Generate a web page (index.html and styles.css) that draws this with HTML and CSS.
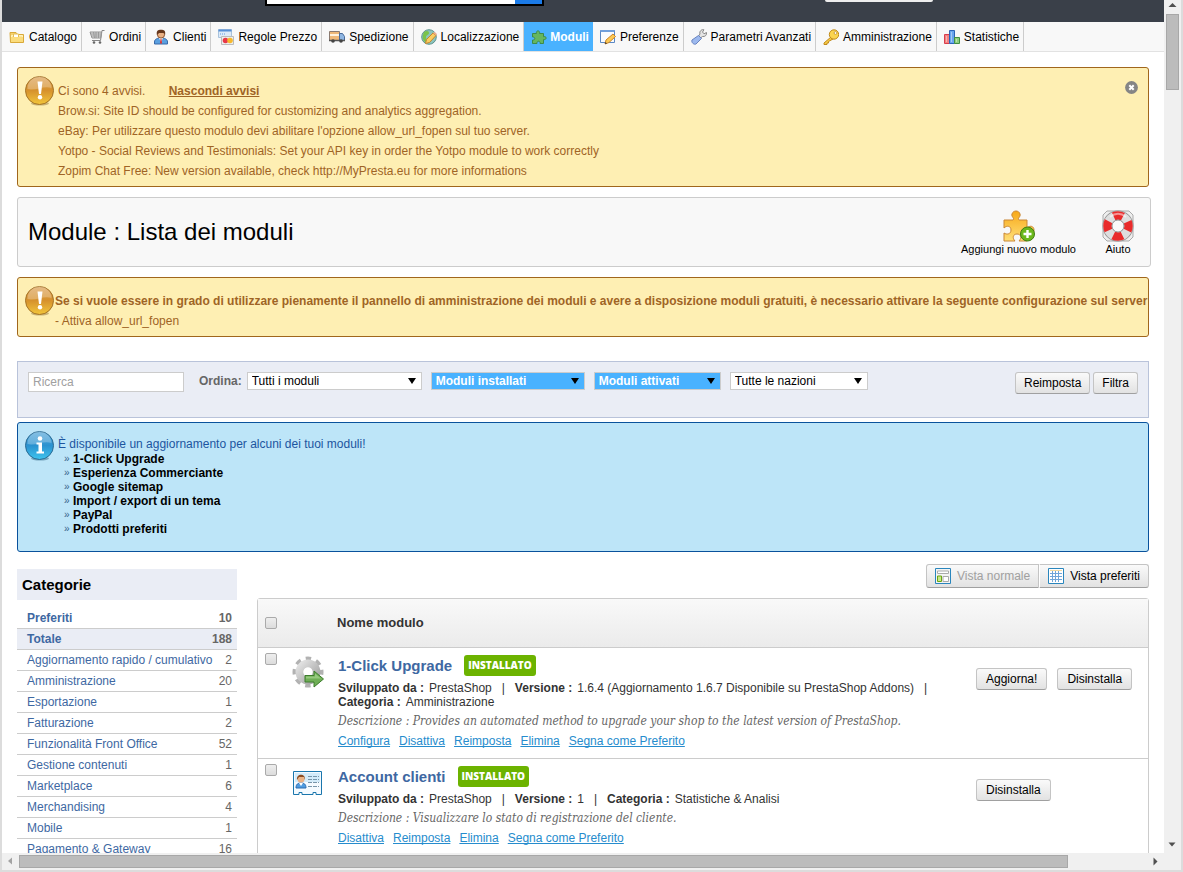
FILE: index.html
```html
<!DOCTYPE html>
<html lang="it">
<head>
<meta charset="utf-8">
<title>Module : Lista dei moduli</title>
<link rel="stylesheet" href="styles.css">
</head>
<body>
<svg class="defs" aria-hidden="true">
  <defs>
    <linearGradient id="gold" x1="0" y1="0" x2="0" y2="1"><stop offset="0" stop-color="#dda45c"/><stop offset=".5" stop-color="#d6912c"/><stop offset="1" stop-color="#f2c63c"/></linearGradient>
    <linearGradient id="blue" x1="0" y1="0" x2="0" y2="1"><stop offset="0" stop-color="#5ba9da"/><stop offset=".5" stop-color="#2a92d0"/><stop offset="1" stop-color="#3fc4ee"/></linearGradient>
    <linearGradient id="puzzle" x1="0" y1="0" x2="0" y2="1"><stop offset="0" stop-color="#f7a818"/><stop offset="1" stop-color="#ffe079"/></linearGradient>
    <linearGradient id="gear" x1="0" y1="0" x2="1" y2="1"><stop offset="0" stop-color="#e2e2e2"/><stop offset="1" stop-color="#a4a4a4"/></linearGradient>
    <symbol id="warn" viewBox="0 0 30 30">
      <ellipse cx="15" cy="27.500" rx="9" ry="2" fill="#a58d54" opacity=".6"/>
      <circle cx="14.500" cy="14.500" r="14" fill="url(#gold)" stroke="#a37228"/>
      <path d="M2.500 13a12 12 0 0 1 24-1c-7-3-16 3-24 1z" fill="#fff" opacity=".25"/>
      <path d="M12.500 5.500h5l-1.500 12.500h-2z" fill="#fff"/><circle cx="15" cy="21.200" r="2.200" fill="#fff"/>
    </symbol>
    <symbol id="info" viewBox="0 0 30 30">
      <ellipse cx="15" cy="27.500" rx="9" ry="2" fill="#497d99" opacity=".6"/>
      <circle cx="14.500" cy="14.500" r="14" fill="url(#blue)" stroke="#2b6a92"/>
      <path d="M2.500 13a12 12 0 0 1 24-1c-7-3-16 3-24 1z" fill="#fff" opacity=".25"/>
      <circle cx="15" cy="7.500" r="2.300" fill="#fff"/><path d="M11.500 11.500h5.500v9h2v2h-7.500v-2h2v-7h-2z" fill="#fff"/>
    </symbol>
  </defs>
</svg>
<div class="window">
  <div class="viewport">
    <header class="topbar">
      <div class="topsearch"><span></span></div>
      <div class="topbutton"></div>
    </header>
    <nav class="menu">
      <a href="#"><svg viewBox="0 0 16 16"><path d="M1 3.500h6l1.500 2H14.500v8H1.500z" fill="#f6d26d" stroke="#d9a93a"/><path d="M2.500 6.500h11v6h-11z" fill="#ffe89a" stroke="#fff3bf"/><path d="M4.500 5h5v4h-5z" fill="#fff" stroke="#e4bd55"/><path d="M2 8h12v5H2z" fill="#fbdc7c"/></svg>Catalogo</a>
      <a href="#"><svg viewBox="0 0 16 16"><path d="M15.500 1.500h-2.500l-1.500 10H3" fill="none" stroke="#858585"/><path d="M1 3h11.500l-.8 6H3z" fill="#ddd" stroke="#929292"/><path d="M2 5h10M2.500 7h9.500M4.500 3l1 6M7 3v6M9.500 3v6" stroke="#909090" stroke-width=".8"/><circle cx="5" cy="13.500" r="1.300" fill="#666"/><circle cx="11" cy="13.500" r="1.300" fill="#666"/></svg>Ordini</a>
      <a href="#"><svg viewBox="0 0 16 16"><path d="M1.500 15v-2c0-3 3-4 6.500-4s6.500 1 6.500 4v2z" fill="#5aa0e0" stroke="#3868a8"/><path d="M6 9l2 4 2-4z" fill="#fff"/><path d="M7.500 10h1l.5 4-1 1-1-1z" fill="#d33"/><circle cx="8" cy="5.500" r="3.600" fill="#e9b083" stroke="#8c5430"/><path d="M4 6C3 2 5 .8 8 .8S13 2 12 6l-1-2H6z" fill="#66371c"/></svg>Clienti</a>
      <a href="#"><svg viewBox="0 0 16 16"><path d="M.5.500h13v8H.5z" fill="#dceaf8" stroke="#a8c2dc"/><path d="M.5.500h13v2H.5z" fill="#568fd6"/><path d="M2 5h6" stroke="#629bdc" stroke-dasharray="1 1"/><path d="M3.500 7.500h12v8h-12z" fill="#eee" stroke="#bbb"/><circle cx="7.500" cy="11.500" r="2.800" fill="#e83848"/><circle cx="12" cy="11.500" r="2.800" fill="#f7b92d"/></svg>Regole Prezzo</a>
      <a href="#"><svg viewBox="0 0 16 16"><path d="M.5 2.500h10v9H.5z" fill="#eeb878" stroke="#8a7a70"/><path d="M1 6h9" stroke="#fff2dd" stroke-width="2"/><path d="M10.500 4.500h3l2 3v4h-5z" fill="#8fb6e2" stroke="#496b9a"/><path d="M0 11.500h16" stroke="#555" stroke-width="1.500"/><circle cx="4" cy="12" r="1.800" fill="#444"/><circle cx="12" cy="12" r="1.800" fill="#444"/></svg>Spedizione</a>
      <a href="#"><svg viewBox="0 0 16 16"><circle cx="8" cy="8" r="7.300" fill="#8cc4bd" stroke="#5d938e"/><path d="M3 3c3-2 5-1 5 1s-3 2-3 4 2 3 1 6c-3-1-5-4-4-8zM11 3l3 4-2 3z" fill="#7bc34b"/><path d="M4.500 14.500l1-4L12 4l3 2.500-6.500 7z" fill="#f9cd62" stroke="#c8862c"/><path d="M12 4l3 2.500 1-1.500-2.500-2z" fill="#efab88"/></svg>Localizzazione</a>
      <a href="#" class="active"><svg viewBox="0 0 16 16"><path d="M1.500 4.500h4C4.500 1 9.500 1 8.500 4.500h4v3.200c3.500-1 3.500 3.600 0 2.800v4H9c.8-3-3.600-3-3 0H1.500v-3.500c3 .5 3-3.500 0-3z" fill="#65b660" stroke="#3d8b4a"/></svg>Moduli</a>
      <a href="#"><svg viewBox="0 0 16 16"><path d="M.5 1.500h14v12H.5z" fill="#f8fbff" stroke="#5b88c4"/><path d="M.5 2h14" stroke="#6f9fdc" stroke-width="2"/><path d="M5 15l1-4 7-6 2.500 2.500-6.500 6z" fill="#fbc955" stroke="#cc8424"/><path d="M5 15l.5-2 1.500 1.500z" fill="#333"/></svg>Preferenze</a>
      <a href="#"><svg viewBox="0 0 16 16"><path d="M9 5C8 2 11 0 13 .8L11.500 3l1.500 1.800L15.500 3.500C16 6 14 8 11.500 7.500L9.500 9 7.500 7z" fill="#e4e4e4" stroke="#888"/><path d="M7.500 6.500l3 3L5 15c-2 1-5-1.500-4-4z" fill="#9db9ee" stroke="#6884c0"/></svg>Parametri Avanzati</a>
      <a href="#"><svg viewBox="0 0 16 16"><path d="M8 8L1 14v1.500h3V14h1.500v-1.500L10 10z" fill="#f7ca45" stroke="#c08a1c"/><circle cx="11" cy="5.500" r="4.700" fill="#fbd450" stroke="#c08a1c"/><circle cx="12.500" cy="4" r="1.400" fill="#fff" stroke="#b98520" stroke-width=".7"/></svg>Amministrazione</a>
      <a href="#"><svg viewBox="0 0 16 16"><path d="M.5 5.500h5v9h-5z" fill="#f28080" stroke="#d83c4c"/><path d="M5.500 1.500h5v13h-5z" fill="#68a5ee" stroke="#2b64b8"/><path d="M10.500 8.500h5v6h-5z" fill="#8fce7c" stroke="#3f8f42"/><path d="M2.500 7v6M7.500 3v10M12.500 10v3" stroke="#fff" opacity=".4"/></svg>Statistiche</a>
    </nav>
    <main class="content">
      <section class="alert warning">
        <svg class="badge"><use href="#warn"/></svg>
        <div class="lines">
          <p>Ci sono 4 avvisi. <a class="hide" href="#">Nascondi avvisi</a></p>
          <p>Brow.si: Site ID should be configured for customizing and analytics aggregation.</p>
          <p>eBay: Per utilizzare questo modulo devi abilitare l'opzione allow_url_fopen sul tuo server.</p>
          <p>Yotpo - Social Reviews and Testimonials: Set your API key in order the Yotpo module to work correctly</p>
          <p>Zopim Chat Free: New version available, check http://MyPresta.eu for more informations</p>
        </div>
        <button class="close" aria-label="Chiudi"><svg viewBox="0 0 13 13"><circle cx="6.500" cy="6.500" r="6.400" fill="#858585"/><path d="M4.300 4.300l4.400 4.400M8.700 4.300L4.300 8.700" stroke="#fff" stroke-width="2"/></svg></button>
      </section>

      <section class="pagehead">
        <h1>Module : Lista dei moduli</h1>
        <div class="tools">
          <a href="#"><svg viewBox="0 0 32 32"><path d="M1 10h9c2-2-2-3-1-6 1-4 7-4 8 0 1 3-3 4-1 6h8v8c3-3 7-2 7 2s-4 5-7 3v8h-8c3-3 2-7-2-7s-5 4-2 7H1v-8c3 2 7 1 7-3s-4-5-7-2z" fill="url(#puzzle)" stroke="#c98736"/><circle cx="24.500" cy="24" r="7" fill="#6cb81c" stroke="#3f7d12"/><path d="M24.500 20v8M20.500 24h8" stroke="#fff" stroke-width="2.400"/></svg>Aggiungi nuovo modulo</a>
          <a href="#"><svg viewBox="0 0 32 32"><path d="M5 1h22l4 4v22l-4 4H5l-4-4V5z" fill="#eee" stroke="#aaa"/><circle cx="16" cy="16" r="10.500" fill="none" stroke="#8f8f8f" stroke-width="10"/><circle cx="16" cy="16" r="10.500" fill="none" stroke="#dedede" stroke-width="8.500"/><circle cx="16" cy="16" r="10.500" fill="none" stroke="#e92b2b" stroke-width="8.500" stroke-dasharray="9.500 6.993" stroke-dashoffset="4.750"/><circle cx="16" cy="16" r="6" fill="#fafafa" stroke="#999"/><path d="M8 7c5-4 11-4 16 0" fill="none" stroke="#fff" stroke-width="2" opacity=".5"/></svg>Aiuto</a>
        </div>
      </section>

      <section class="alert warning compact">
        <svg class="badge"><use href="#warn"/></svg>
        <div class="lines">
          <p class="strong">Se si vuole essere in grado di utilizzare pienamente il pannello di amministrazione dei moduli e avere a disposizione moduli gratuiti, è necessario attivare la seguente configurazione sul server</p>
          <p>- Attiva allow_url_fopen</p>
        </div>
      </section>

      <form class="filters">
        <input type="text" placeholder="Ricerca" aria-label="Ricerca">
        <label for="ordina">Ordina:</label>
        <span class="select wide"><select id="ordina"><option>Tutti i moduli</option></select></span>
        <span class="select on medium"><select aria-label="Installazione"><option>Moduli installati</option></select></span>
        <span class="select on small"><select aria-label="Attivazione"><option>Moduli attivati</option></select></span>
        <span class="select country"><select aria-label="Nazione"><option>Tutte le nazioni</option></select></span>
        <div class="actions"><button class="btn" type="button">Reimposta</button><button class="btn" type="button">Filtra</button></div>
      </form>

      <section class="alert notice">
        <svg class="badge"><use href="#info"/></svg>
        <div class="lines">
          <p>È disponibile un aggiornamento per alcuni dei tuoi moduli!</p>
          <ul>
            <li>1-Click Upgrade</li>
            <li>Esperienza Commerciante</li>
            <li>Google sitemap</li>
            <li>Import / export di un tema</li>
            <li>PayPal</li>
            <li>Prodotti preferiti</li>
          </ul>
        </div>
      </section>

      <div class="columns">
        <aside class="categories">
          <h2>Categorie</h2>
          <ul>
            <li class="bold"><a href="#">Preferiti</a><span>10</span></li>
            <li class="bold current"><a href="#">Totale</a><span>188</span></li>
            <li><a href="#">Aggiornamento rapido / cumulativo</a><span>2</span></li>
            <li><a href="#">Amministrazione</a><span>20</span></li>
            <li><a href="#">Esportazione</a><span>1</span></li>
            <li><a href="#">Fatturazione</a><span>2</span></li>
            <li><a href="#">Funzionalità Front Office</a><span>52</span></li>
            <li><a href="#">Gestione contenuti</a><span>1</span></li>
            <li><a href="#">Marketplace</a><span>6</span></li>
            <li><a href="#">Merchandising</a><span>4</span></li>
            <li><a href="#">Mobile</a><span>1</span></li>
            <li><a href="#">Pagamento &amp; Gateway</a><span>16</span></li>
          </ul>
        </aside>
        <div class="modules">
          <div class="views">
            <button disabled><svg viewBox="0 0 16 16"><path d="M.5.500h15v15H.5z" fill="#f4f4f4" stroke="#2a86bd"/><path d="M2.500 3h11v2.500h-11zM8 8.500h5.500v5H8z" fill="#fff" stroke="#aaa"/><path d="M2.500 8h4v5.500h-4z" fill="#c9e887" stroke="#6aa513"/></svg>Vista normale</button>
            <button><svg viewBox="0 0 16 16"><path d="M.5.500h15v15H.5z" fill="#fff" stroke="#2a86bd"/><path d="M2 2.500h12" stroke="#f0d9a0"/><path d="M2 5.500h12M2 8.500h12M2 11.500h12M4.500 3v11M7.500 3v11M10.500 3v11" stroke="#6fa5d8"/></svg>Vista preferiti</button>
          </div>
          <table>
            <thead>
              <tr><th class="check"><input type="checkbox" aria-label="Seleziona tutti"></th><th class="icon"></th><th class="name">Nome modulo</th><th class="ops"></th></tr>
            </thead>
            <tbody>
              <tr>
                <td class="check"><input type="checkbox" aria-label="1-Click Upgrade"></td>
                <td class="icon"><svg viewBox="0 0 32 32"><circle cx="16" cy="16" r="13" fill="none" stroke="#b2b2b2" stroke-width="5" stroke-dasharray="5.200 5.010" stroke-dashoffset="2.600"/><circle cx="16" cy="16" r="8.500" fill="none" stroke="url(#gear)" stroke-width="8"/><circle cx="16" cy="16" r="4.500" fill="#fff"/><path d="M13 19.500h9V15l9.500 8-9.500 8v-5h-9z" fill="#6fae56" stroke="#3d7d2c"/><path d="M14 20.500h9v-3l6 5H14z" fill="#a6d490" opacity=".7"/></svg></td>
                <td class="name">
                  <h3>1-Click Upgrade <span>INSTALLATO</span></h3>
                  <div class="meta"><span><b>Sviluppato da :</b>PrestaShop</span><i>|</i><span><b>Versione :</b>1.6.4 (Aggiornamento 1.6.7 Disponibile su PrestaShop Addons)</span><i>|</i><span><b>Categoria :</b>Amministrazione</span></div>
                  <p>Descrizione : Provides an automated method to upgrade your shop to the latest version of PrestaShop.</p>
                  <div class="links"><a href="#">Configura</a><a href="#">Disattiva</a><a href="#">Reimposta</a><a href="#">Elimina</a><a href="#">Segna come Preferito</a></div>
                </td>
                <td class="ops"><div><button class="btn">Aggiorna!</button><button class="btn">Disinstalla</button></div></td>
              </tr>
              <tr>
                <td class="check"><input type="checkbox" aria-label="Account clienti"></td>
                <td class="icon"><svg viewBox="0 0 32 32"><path d="M1.500 4.500h28v23H24v-2h-3v2H10v-2H7v2H1.500z" fill="#f4faff" stroke="#1a76ad"/><path d="M3 6h25v9H3z" fill="#d3ebfa"/><path d="M4 21c0-4 2-5 5-5s5 1 5 5z" fill="#4f9be0" stroke="#2d6db0"/><path d="M7 16l2 3 2-3z" fill="#fff"/><circle cx="9" cy="12" r="3.500" fill="#eab285"/><path d="M5 13c-1-7 9-7 8 0l-1-3H7z" fill="#8a4c22"/><path d="M16 9.500h11M16 12.500h11M16 15.500h11M16 19.500h11" stroke="#7795aa" stroke-dasharray="4 1"/></svg></td>
                <td class="name">
                  <h3>Account clienti <span>INSTALLATO</span></h3>
                  <div class="meta"><span><b>Sviluppato da :</b>PrestaShop</span><i>|</i><span><b>Versione :</b>1</span><i>|</i><span><b>Categoria :</b>Statistiche &amp; Analisi</span></div>
                  <p>Descrizione : Visualizzare lo stato di registrazione del cliente.</p>
                  <div class="links"><a href="#">Disattiva</a><a href="#">Reimposta</a><a href="#">Elimina</a><a href="#">Segna come Preferito</a></div>
                </td>
                <td class="ops"><div><button class="btn">Disinstalla</button></div></td>
              </tr>
            </tbody>
          </table>
        </div>
      </div>
    </main>
  </div>
  <div class="vbar">
    <svg viewBox="0 0 17 14"><path d="M4.500 7L8.500 3l4 4z" fill="#505050"/></svg>
    <div class="thumb"></div>
    <svg class="end" viewBox="0 0 17 17"><path d="M4.500 6.500h7l-3.500 4z" fill="#505050"/></svg>
  </div>
  <div class="hbar">
    <svg viewBox="0 0 17 17"><path d="M10 4.500v7L6 8z" fill="#a3a3a3"/></svg>
    <div class="thumb"></div>
    <svg viewBox="0 0 17 17"><path d="M6.500 4.500v8l4-4z" fill="#505050"/></svg>
  </div>
</div>
</body>
</html>
```

FILE: styles.css
```css
* { box-sizing: border-box; }

body {
  margin: 0;
  font: 12px/20px "Liberation Sans", Arial, sans-serif;
  color: #333;
  background: #fff;
}

h1, h2, h3, p, ul { margin: 0; padding: 0; }
ul { list-style: none; }
svg { display: block; flex: none; }
button, input, select { font: inherit; margin: 0; }
.defs { position: absolute; width: 0; height: 0; }

.window {
  display: grid;
  grid-template-columns: minmax(0, 1fr) 17px;
  grid-template-rows: minmax(0, 1fr) 17px;
  height: 100vh;
  border: solid #dcdcdc;
  border-width: 0 2px 2px;
}
.viewport { overflow: hidden; }

/* scrollbars */
.vbar, .hbar { display: flex; background: #f0f0f0; }
.vbar { flex-direction: column; }
.vbar svg { width: 17px; height: 14px; }
.vbar .end { height: 17px; margin-top: auto; }
.vbar .thumb { height: 76px; margin: 0 2px; }
.hbar { grid-column: 1 / -1; padding-right: 17px; }
.hbar svg { width: 17px; height: 17px; }
.hbar .thumb { flex: 1; margin: 2px 79px 2px 0; }
.thumb { background: #bcbcbc; border: 1px solid #a8a8a8; }

/* top */
.topbar { display: flex; align-items: flex-start; height: 22px; background: #3a4049; }
.topsearch {
  width: 279px;
  height: 6px;
  margin-left: 263px;
  border: solid #000;
  border-width: 0 2px 2px;
  background: #fff;
  display: flex;
  justify-content: flex-end;
}
.topsearch span { width: 27px; background: #1b7be8; }
.topbutton { width: 108px; height: 2px; margin-left: 281px; background: #eee; border-radius: 0 0 3px 3px; }

.menu { display: flex; height: 30px; background: #f8f8f8; border-bottom: 1px solid #e2e2e2; }
.menu a {
  display: flex;
  align-items: center;
  gap: 4px;
  padding: 0 4px 0 7px;
  border-right: 1px solid #ccc;
  color: #000;
  text-decoration: none;
  white-space: nowrap;
}
.menu svg { width: 16px; height: 16px; }
.menu .active { gap: 3px; padding-right: 3px; background: #49b2ff; color: #fff; font-weight: bold; border-color: #49b2ff; }

.content { padding: 15px 15px 0; }

/* alerts */
.alert {
  display: flex;
  gap: 3px;
  padding: 8px 7px 5px;
  border: 1px solid;
  border-radius: 3px;
}
.alert.compact { gap: 0; }
.alert .badge { width: 30px; height: 30px; }
.alert .lines { flex: 1; padding-top: 5px; white-space: nowrap; }
.warning { background: #feefb3; border-color: #a0661c; color: #9f6425; }
.strong, .hide { font-weight: bold; }
.hide { margin-left: 20px; color: inherit; }
.close { width: 13px; height: 13px; margin: 5px 3px 0 0; padding: 0; border: 0; background: none; }
.notice { background: #bde5f8; border-color: #0a529c; color: #1c55a0; padding-bottom: 15px; }
.notice p { line-height: 16px; }
.notice li { display: flex; padding-left: 6px; line-height: 14px; font-weight: bold; color: #000; }
.notice li::before { content: "»"; width: 9px; font-weight: normal; font-size: 10px; color: #35648a; }

/* heading */
.pagehead {
  display: flex;
  align-items: center;
  margin: 10px -2px 10px 0;
  height: 70px;
  padding: 0 16px 0 10px;
  background: #f8f8f8;
  border: 1px solid #ccc;
  border-radius: 3px;
}
h1 { font-size: 24px; line-height: 30px; font-weight: normal; color: #000; flex: 1; }
.tools { display: flex; gap: 26px; padding-top: 2px; }
.tools a { display: flex; flex-direction: column; align-items: center; font-size: 11px; line-height: 14px; color: #000; text-decoration: none; }
.tools svg { width: 32px; height: 32px; }

/* filters */
.filters {
  display: flex;
  align-items: flex-start;
  gap: 9px;
  margin: 24px 0 4px;
  height: 57px;
  padding: 10px;
  background: #eaedf5;
  border: 1px solid #b9c3da;
}
.filters input { width: 156px; height: 20px; padding: 0 4px; border: 1px solid #ccc; background: #fff; }
.filters input::placeholder { color: #a0a0a0; }
.filters label { margin-left: 6px; margin-right: -4px; line-height: 18px; font-weight: bold; color: #666; }
.select { position: relative; height: 18px; }
.select::after {
  content: "";
  position: absolute;
  right: 6px;
  top: 6px;
  border: solid transparent;
  border-width: 6px 4px 0;
  border-top-color: #000;
  pointer-events: none;
}
.select select {
  display: block;
  appearance: none;
  width: 100%;
  height: 18px;
  padding: 0 4px;
  border: 1px solid #ccc;
  border-radius: 0;
  background: #fff;
  color: #000;
  line-height: 16px;
}
.select.on select { background: #49b2ff; color: #fff; font-weight: bold; }
.wide { width: 175px; }
.medium { width: 154px; }
.small { width: 127px; }
.country { width: 138px; }
.actions { display: flex; gap: 3px; margin-left: auto; }

.btn, .views button {
  border: 1px solid #c4c4c4;
  border-bottom-color: #a0a0a0;
  border-radius: 3px;
  background: linear-gradient(#fafafa, #e2e2e2);
  color: #000;
  white-space: nowrap;
}
.btn { height: 22px; padding: 0 9px; line-height: 20px; }
.filters .btn { padding: 0 8px; }

/* columns */
.columns { display: grid; grid-template-columns: 220px minmax(0, 1fr); gap: 20px; padding-top: 12px; }
.categories { padding-top: 5px; }
.categories h2 { padding-left: 5px; font-size: 15px; line-height: 31px; color: #000; background: #eaedf5; }
.categories ul { padding-top: 8px; }
.categories li { display: flex; justify-content: space-between; padding: 0 5px 0 10px; border-bottom: 1px solid #ccc; color: #666; white-space: nowrap; }
.categories a { color: #3e68a2; text-decoration: none; }
.categories .bold { font-weight: bold; }
.categories .current { background: #eaedf5; }

.views { display: flex; justify-content: flex-end; margin-bottom: 10px; }
.views button { display: flex; align-items: center; gap: 6px; height: 24px; padding: 0 8px; }
.views button:first-child { border-radius: 3px 0 0 3px; color: #a0a0a0; }
.views button:last-child { border-radius: 0 3px 3px 0; border-left-color: #fff; }
.views svg { width: 16px; height: 16px; }

table { width: 100%; border-collapse: separate; border-spacing: 0; border: 1px solid #ccc; border-radius: 3px 3px 0 0; table-layout: fixed; }
th { height: 49px; padding: 0; text-align: left; font-size: 13px; background: linear-gradient(#f9f9f9, #ebebeb); border-bottom: 1px solid #ccc; }
td { height: 111px; padding: 0; vertical-align: top; border-bottom: 1px solid #ccc; }
.check { width: 34px; padding-left: 7px; }
.icon { width: 45px; }
.ops { width: 172px; }
td.check { padding-top: 5px; }
td.icon { padding-top: 8px; }
td.icon svg { width: 32px; height: 32px; }
input[type="checkbox"] {
  display: block;
  appearance: none;
  width: 12px;
  height: 12px;
  border: 1px solid #aaa;
  border-radius: 2px;
  background: linear-gradient(#eee, #dcdcdc);
}
.name h3 { display: flex; align-items: center; gap: 12px; height: 21px; margin-top: 7px; font-size: 15px; color: #3e68a2; }
.name h3 span { padding: 0 4px; border-radius: 3px; background: #6cb300; color: #fff; font: 800 10px/21px "Open Sans", sans-serif; }
td.name { padding-left: 1px; }
.meta { display: flex; flex-wrap: wrap; column-gap: 10px; margin-top: 5px; line-height: 14px; }
.meta i { font-style: normal; }
.meta b { margin-right: 5px; }
.name p { margin-top: 2px; font: italic 12px/20px "DejaVu Serif Condensed", "Liberation Serif", serif; color: #666; white-space: nowrap; }
.links { display: flex; gap: 9px; margin-top: 3px; line-height: 14px; }
.links a { color: #268ccd; text-decoration-skip-ink: none; }
td.ops div { display: flex; gap: 10px; margin-top: 20px; }
```
